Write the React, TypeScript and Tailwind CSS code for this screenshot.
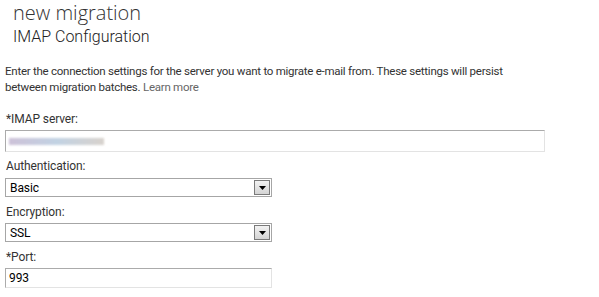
import { ChangeEvent, useState } from 'react';

const FONT = "font-['Roboto','Open_Sans',sans-serif]";

function SelectBox({ value }: { value: string }) {
  return (
    <div className="flex h-[19px] w-[267px] items-center border border-[#a6a6a6] bg-white">
      <span className="flex-1 pl-[4px] text-[12px] leading-none text-black">{value}</span>
      <span className="mr-[1px] flex h-[15px] w-[16px] items-center justify-center border border-[#7a7a7a] bg-gradient-to-b from-[#f2f2f2] to-[#d4d4d4]">
        <svg width="7" height="4" viewBox="0 0 7 4">
          <path d="M0 0h7L3.5 4z" fill="#000" />
        </svg>
      </span>
    </div>
  );
}

export default function App() {
  const [port, setPort] = useState('993');

  return (
    <div className={`h-[297px] w-[599px] bg-white text-[#333] ${FONT}`}>
      <div className="pl-[13px]">
        <h1 className="font-['Open_Sans',sans-serif] text-[20px] font-light leading-[26px] text-[#333]">new migration</h1>
        <h2 className="mt-[1px] text-[16px] font-light leading-[20px] text-[#222]">IMAP Configuration</h2>
      </div>

      <div className="px-[5px] pt-[16px]">
        <p className="text-[11.5px] leading-[16px] tracking-[-0.25px]">
          Enter the connection settings for the server you want to migrate e-mail from. These settings will persist
          <br />
          between migration batches. <span className="text-[#666]">Learn more</span>
        </p>

        <div className="mt-[16px] flex flex-col text-[12px] tracking-[-0.1px]">
          <label className="pl-[1px] leading-[16px]">*IMAP server:</label>
          <div className="mt-[3px] flex h-[22px] w-[540px] items-center border border-[#ababab] border-b-[#e3e3e3] border-r-[#e3e3e3] bg-white pl-[3px]">
            <span className="h-[7px] w-[95px] bg-gradient-to-r from-[#b8a8c8] via-[#a8c0d8] to-[#c8c0b8] opacity-70 blur-[1px]" />
          </div>

          <label className="mt-[6px] pl-[1px] leading-[16px]">Authentication:</label>
          <div className="mt-[4px]">
            <SelectBox value="Basic" />
          </div>

          <label className="mt-[7px] pl-[1px] leading-[16px]">Encryption:</label>
          <div className="mt-[3px]">
            <SelectBox value="SSL" />
          </div>

          <label className="mt-[7px] pl-[1px] leading-[16px]">*Port:</label>
          <input
            value={port}
            onChange={(e: ChangeEvent<HTMLInputElement>) => setPort(e.target.value)}
            className="mt-[3px] h-[20px] w-[267px] border border-[#ababab] border-b-[#e3e3e3] border-r-[#e3e3e3] bg-white pl-[3px] text-[12px] text-black outline-none"
          />
        </div>
      </div>
    </div>
  );
}
